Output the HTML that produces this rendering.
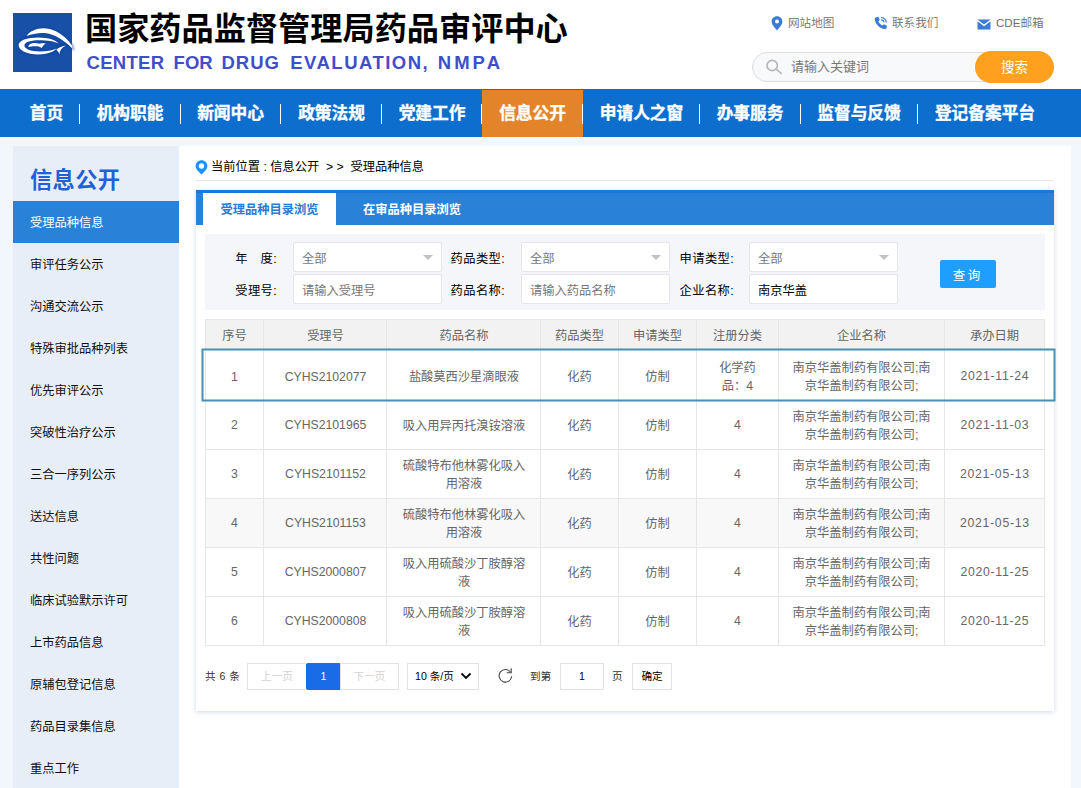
<!DOCTYPE html>
<html lang="zh-CN">
<head>
<meta charset="utf-8">
<title>国家药品监督管理局药品审评中心</title>
<style>
*{box-sizing:border-box;margin:0;padding:0}
html,body{width:1081px;height:788px;overflow:hidden}
body{position:relative;background:#f2f7fd;font-family:"Liberation Sans","Noto Sans CJK SC",sans-serif;font-size:12.25px;color:#333}
.abs{position:absolute}
#hdr{position:absolute;left:0;top:0;width:1081px;height:89px;background:#fff}
#logo{position:absolute;left:13px;top:13px;width:59px;height:59px;background:#1850a8}
#logo svg{position:absolute;left:0;top:0;overflow:visible}
#t1{position:absolute;left:85px;top:6.5px;font-size:32.2px;font-weight:bold;color:#000;line-height:44px;white-space:nowrap;letter-spacing:0}
#t2{position:absolute;left:86px;top:50px;font-size:18.5px;font-weight:bold;color:#3f4fcb;line-height:26px;white-space:nowrap}
.tl{position:absolute;top:15px;height:16px;line-height:16px;font-size:11.6px;color:#6e6e6e;font-weight:350;white-space:nowrap}
#sbox{position:absolute;left:752px;top:52px;width:300px;height:30px;border:1px solid #ddd;border-radius:15px;background:#f8f9fb}
#sph{position:absolute;left:791px;top:57px;font-size:13px;line-height:20px;color:#777;white-space:nowrap}
#sbtn{position:absolute;left:975px;top:51px;width:79px;height:32px;border-radius:16px;background:#ffa01f;color:#fff;font-size:13.5px;line-height:33px;text-align:center}
#nav{position:absolute;left:0;top:89px;width:1081px;height:48px;background:#0e6ecd}
.ni{position:absolute;top:0;height:48px;line-height:50.5px;color:#fff;font-size:16.7px;font-weight:bold;text-align:center;white-space:nowrap;-webkit-text-stroke:.35px #fff}
.ni.on{background:linear-gradient(#0e6ecd 1px,#e3842b 1px)}
.sep{position:absolute;top:15px;width:1px;height:20px;background:#fff}
#side{position:absolute;left:13px;top:146px;width:166px;height:642px;background:#e8eef7}
#side h2{position:absolute;left:17px;top:18.5px;letter-spacing:.4px;font-size:22.2px;line-height:32px;font-weight:bold;color:#1f62d8;white-space:nowrap}
.si{position:absolute;left:0;width:166px;height:42px;line-height:45px;padding-left:17px;font-size:12.25px;color:#111;white-space:nowrap}
.si.on{background:#2982d8;color:#fff}
#main{position:absolute;left:179px;top:146px;width:892px;height:642px;background:#fff}
</style>
</head>
<body>
<div id="hdr">
  <div id="logo">
    <svg width="59" height="59" viewBox="0 0 59 59">
      <defs><filter id="lb" x="-10%" y="-10%" width="130%" height="130%"><feGaussianBlur stdDeviation="0.45"/></filter><filter id="lb2" x="-10%" y="-10%" width="130%" height="130%"><feGaussianBlur stdDeviation="0.9"/></filter>
      <linearGradient id="tg" x1="0" y1="0" x2="1" y2="0"><stop offset="0" stop-color="#c8d6ee"/><stop offset="1" stop-color="#fff"/></linearGradient></defs>
      <path d="M58.5 31.8 C60.5 34 62.5 36.8 64.5 40 C62 37.6 60 35.8 58.5 34.6 Z" fill="url(#tg)" filter="url(#lb)"/>
      <g fill="none" stroke="#0c3c98" stroke-width="1.6" filter="url(#lb2)" opacity=".75"><path d="M5.6 32 C5.6 27.4 14 24.4 25.2 24.4 C35.5 24.4 43.5 27.2 45.6 30.6 C41.5 28.4 34.5 27.2 25.6 27.2 C16.5 27.2 11.4 29.6 11.4 32.6 C11.4 36 17.5 38.5 26.5 38.5 C33.5 38.5 39.5 37.5 43.6 35.6 C40.5 39.4 33.5 41.4 25.4 41.4 C13.6 41.4 5.6 37.4 5.6 32 Z"/>
      <path d="M13.6 23 C16.5 18.4 23 15.3 30.5 15.3 C38.5 15.3 47.5 19.4 54.6 27 C56.4 29 58 31 59.4 33 L59.4 35.8 C57.4 33.6 55.4 31.8 52.6 29.6 C46.4 24.6 39.4 20.400000000000002 30.5 20 C24.5 19.8 18.6 21.2 13.6 23 Z"/>
      <path d="M53 32.4 C48.6 33 45 34.8 43.2 36.8 C44.8 38 46 39.6 46.4 41.4 C46.4 37.8 48.6 34.6 53 32.4 Z"/>
      <path d="M15.2 33.9 C15.6 31 18.8 29.7 22.4 30 C24.6 30.2 26.200000000000003 30.9 27.4 30.6 C29 29.7 31.2 29.6 32.8 30.8 C30.8 31.6 29.8 33 28.8 35 C27.2 33.6 24.8 33.2 21.8 33.2 C19.2 33.2 16.8 33.4 15.2 33.9 Z"/></g>
      <g fill="#fff" filter="url(#lb)">
      <path d="M5.6 32 C5.6 27.4 14 24.4 25.2 24.4 C35.5 24.4 43.5 27.2 45.6 30.6 C41.5 28.4 34.5 27.2 25.6 27.2 C16.5 27.2 11.4 29.6 11.4 32.6 C11.4 36 17.5 38.5 26.5 38.5 C33.5 38.5 39.5 37.5 43.6 35.6 C40.5 39.4 33.5 41.4 25.4 41.4 C13.6 41.4 5.6 37.4 5.6 32 Z"/>
      <path d="M13.6 23 C16.5 18.4 23 15.3 30.5 15.3 C38.5 15.3 47.5 19.4 54.6 27 C56.4 29 58 31 59.4 33 L59.4 35.8 C57.4 33.6 55.4 31.8 52.6 29.6 C46.4 24.6 39.4 20.400000000000002 30.5 20 C24.5 19.8 18.6 21.2 13.6 23 Z"/>
      <path d="M53 32.4 C48.6 33 45 34.8 43.2 36.8 C44.8 38 46 39.6 46.4 41.4 C46.4 37.8 48.6 34.6 53 32.4 Z"/>
      <path d="M15.2 33.9 C15.6 31 18.8 29.7 22.4 30 C24.6 30.2 26.200000000000003 30.9 27.4 30.6 C29 29.7 31.2 29.6 32.8 30.8 C30.8 31.6 29.8 33 28.8 35 C27.2 33.6 24.8 33.2 21.8 33.2 C19.2 33.2 16.8 33.4 15.2 33.9 Z"/>
      </g>
    </svg>
  </div>
  <div id="t1">国家药品监督管理局药品审评中心</div>
  <div id="t2"><span style="position:absolute;left:0.5px;top:0;letter-spacing:0.29px">CENTER</span> <span style="position:absolute;left:87.5px;top:0;letter-spacing:0.09px">FOR</span> <span style="position:absolute;left:135.5px;top:0;letter-spacing:1px">DRUG</span> <span style="position:absolute;left:204.25px;top:0;letter-spacing:1.48px">EVALUATION,</span> <span style="position:absolute;left:351.75px;top:0;letter-spacing:3.05px">NMPA</span></div>

  <svg class="abs" style="left:771px;top:16px" width="12" height="15" viewBox="0 0 12 15"><path d="M6 0.3C2.9 0.3 0.6 2.6 0.6 5.6c0 3.4 3.6 6.6 5.4 8.9 1.8-2.3 5.4-5.5 5.4-8.9C11.400000000000001 2.6 9.1 0.3 6 0.3z" fill="#3a7bd5"/><circle cx="6" cy="5.5" r="2" fill="#fff"/></svg>
  <div class="tl" style="left:788px">网站地图</div>
  <svg class="abs" style="left:874px;top:16px" width="14" height="14" viewBox="0 0 14 14"><path d="M2.2 1.2 L4.4 0.8 L5.8 4 L4.3 5.2 C5 7 6.6 8.7 8.6 9.6 L9.9 8.2 L13 9.8 L12.500000000000002 12 C12.3 12.8 11.6 13.2 10.8 13.1 C5.6 12.4 1.2 8 0.8 2.9 C0.8 2 1.3 1.4 2.2 1.2 Z" fill="#3a7bd5"/><path d="M7.6 1.6 C10 1.8 11.9 3.6 12.2 6" stroke="#3a7bd5" stroke-width="1.2" fill="none" stroke-linecap="round"/><path d="M7.6 3.8 C8.8 4 9.7 4.9 10 6" stroke="#3a7bd5" stroke-width="1.2" fill="none" stroke-linecap="round"/></svg>
  <div class="tl" style="left:892px">联系我们</div>
  <svg class="abs" style="left:977px;top:19px" width="14" height="11" viewBox="0 0 14 11"><path d="M0.5 0.5h13L7 5.6z" fill="#3a7bd5"/><path d="M0.5 2.2L7 7.2l6.5-5V10.5h-13z" fill="#3a7bd5"/></svg>
  <div class="tl" style="left:996px">CDE邮箱</div>

  <div id="sbox"></div>
  <svg class="abs" style="left:765px;top:59px" width="18" height="17" viewBox="0 0 18 17"><circle cx="7.2" cy="6.5" r="5.2" fill="none" stroke="#b8b8b8" stroke-width="1.7"/><path d="M11.6 10.6l4.6 3.8" stroke="#b8b8b8" stroke-width="1.7" stroke-linecap="round"/></svg>
  <div id="sph">请输入关键词</div>
  <div id="sbtn">搜索</div>
</div>

<div id="nav">
  <div class="ni" style="left:13px;width:67px">首页</div>
  <div class="ni" style="left:80px;width:100px">机构职能</div>
  <div class="ni" style="left:180px;width:101px">新闻中心</div>
  <div class="ni" style="left:281px;width:101px">政策法规</div>
  <div class="ni" style="left:382px;width:100px">党建工作</div>
  <div class="ni on" style="left:482px;width:101px">信息公开</div>
  <div class="ni" style="left:583px;width:117px">申请人之窗</div>
  <div class="ni" style="left:700px;width:100px">办事服务</div>
  <div class="ni" style="left:800px;width:118px">监督与反馈</div>
  <div class="ni" style="left:918px;width:134px">登记备案平台</div>
  <div class="sep" style="left:79px"></div>
  <div class="sep" style="left:180px"></div>
  <div class="sep" style="left:280px"></div>
  <div class="sep" style="left:381px"></div>
  <div class="sep" style="left:481px"></div>
  <div class="sep" style="left:582px"></div>
  <div class="sep" style="left:699px"></div>
  <div class="sep" style="left:800px"></div>
  <div class="sep" style="left:917px"></div>
</div>

<div id="side">
  <h2>信息公开</h2>
  <div class="si on" style="top:55px">受理品种信息</div>
  <div class="si" style="top:97px">审评任务公示</div>
  <div class="si" style="top:139px">沟通交流公示</div>
  <div class="si" style="top:181px">特殊审批品种列表</div>
  <div class="si" style="top:223px">优先审评公示</div>
  <div class="si" style="top:265px">突破性治疗公示</div>
  <div class="si" style="top:307px">三合一序列公示</div>
  <div class="si" style="top:349px">送达信息</div>
  <div class="si" style="top:391px">共性问题</div>
  <div class="si" style="top:433px">临床试验默示许可</div>
  <div class="si" style="top:475px">上市药品信息</div>
  <div class="si" style="top:517px">原辅包登记信息</div>
  <div class="si" style="top:559px">药品目录集信息</div>
  <div class="si" style="top:601px">重点工作</div>
</div>

<div id="main"></div>

<style>
#bc{position:absolute;left:211px;top:158.4px;line-height:18px;font-size:12.25px;color:#000;white-space:nowrap}
#bcl{position:absolute;left:196px;top:180px;width:858px;height:1px;background:#e6e6e6}
#card{position:absolute;left:196px;top:190px;width:858px;height:521px;background:#fff;box-shadow:0 1px 5px rgba(120,140,170,.35)}
#tabs{position:absolute;left:0;top:0;width:858px;height:35px;background:linear-gradient(#1c77d6 3px,#2982d8 3px)}
#tab1{position:absolute;left:7px;top:3px;width:133px;height:32px;background:#fff;color:#2a7bd6;font-weight:bold;font-size:12.25px;line-height:34.5px;text-align:center}
#tab2{position:absolute;left:140px;top:3px;width:152px;height:32px;color:#fff;font-weight:bold;font-size:12.25px;line-height:34.5px;text-align:center}
#flt{position:absolute;left:9px;top:44px;width:840px;height:76px;background:#f4f6fa}
.lb{position:absolute;width:72px;text-align:right;font-size:12.25px;line-height:29px;margin-top:3.4px;color:#000;white-space:nowrap;letter-spacing:.4px}
.ip{position:absolute;width:149px;height:30px;border:1px solid #e6e6e6;border-radius:2px;background:#fff;font-size:12.25px;line-height:24.5px;padding-top:3.8px;padding-left:8px;color:#777;white-space:nowrap}
.ip i{position:absolute;right:8px;top:12px;width:0;height:0;border-left:5px solid transparent;border-right:5px solid transparent;border-top:5px solid #c2c2c2}
#qb{position:absolute;left:744px;top:70px;width:56px;height:28px;background:#1e9fff;border-radius:2px;color:#fff;font-size:12.5px;line-height:32px;text-align:center;word-spacing:-1.2px;padding-right:3px}
</style>
<div id="bc">当前位置 : 信息公开 &nbsp;&gt; &gt; &nbsp;受理品种信息</div>
<svg class="abs" style="left:195px;top:160px" width="13" height="15" viewBox="0 0 13 15"><path d="M6.5 0.3C3.2 0.3 0.6 2.8 0.6 6c0 3.500000000000001 3.9 6.3 5.9 8.7 2-2.4 5.9-5.2 5.9-8.7C12.4 2.8 9.8 0.3 6.5 0.3z" fill="#1e90ff"/><circle cx="6.5" cy="6" r="2.7" fill="#fff"/></svg>
<div id="bcl"></div>
<div id="card">
  <div id="tabs"><div id="tab1">受理品种目录浏览</div><div id="tab2">在审品种目录浏览</div></div>
  <div id="flt"></div>
  <div class="lb" style="left:9px;top:52px">年　度:</div>
  <div class="lb" style="left:9px;top:84px">受理号:</div>
  <div class="ip" style="left:97px;top:52px">全部<i></i></div>
  <div class="ip" style="left:97px;top:84px">请输入受理号</div>
  <div class="lb" style="left:237px;top:52px">药品类型:</div>
  <div class="lb" style="left:237px;top:84px">药品名称:</div>
  <div class="ip" style="left:325px;top:52px">全部<i></i></div>
  <div class="ip" style="left:325px;top:84px">请输入药品名称</div>
  <div class="lb" style="left:466px;top:52px">申请类型:</div>
  <div class="lb" style="left:466px;top:84px">企业名称:</div>
  <div class="ip" style="left:553px;top:52px">全部<i></i></div>
  <div class="ip" style="left:553px;top:84px;color:#000">南京华盖</div>
  <div id="qb">查 询</div>

<style>
#tb{position:absolute;left:0;top:0;font-size:12.25px;color:#666}
.hl{position:absolute;height:1px;background:#e6e6e6;left:9px;width:840px}
.vl{position:absolute;width:1px;background:#e6e6e6;top:129px;height:327px}
.c{position:absolute;display:flex;align-items:center;justify-content:center;text-align:center;line-height:17.5px;white-space:nowrap;color:#666}
#thbg{position:absolute;left:9px;top:129px;width:839px;height:30px;background:#f2f2f2}
#hvbg{position:absolute;left:9px;top:308.5px;width:839px;height:49px;background:#f8f8f8}
#sel{position:absolute;left:6px;top:159px;width:853px;height:53px;border:2px solid #4e94b4;border-radius:1px}
.pg{position:absolute;top:473px;height:26.6px;line-height:24.6px;font-size:10.6px;border:1px solid #e2e2e2;background:#fff;text-align:center;color:#d2d2d2;white-space:nowrap}
.pt{position:absolute;top:473px;height:26px;line-height:26px;font-size:10.6px;color:#333;white-space:nowrap}
</style>
<div id="tb">
<div id="thbg"></div><div id="hvbg"></div>
<div class="hl" style="top:129px"></div><div class="hl" style="top:159px"></div><div class="hl" style="top:210px"></div><div class="hl" style="top:259px"></div><div class="hl" style="top:308px"></div><div class="hl" style="top:357px"></div><div class="hl" style="top:406px"></div><div class="hl" style="top:455px"></div>
<div class="vl" style="left:9px"></div><div class="vl" style="left:67px"></div><div class="vl" style="left:190px"></div><div class="vl" style="left:344px"></div><div class="vl" style="left:422px"></div><div class="vl" style="left:500px"></div><div class="vl" style="left:582px"></div><div class="vl" style="left:748px"></div><div class="vl" style="left:848px"></div>
<div class="c" style="left:10px;top:132.6px;width:57px;height:29px">序号</div><div class="c" style="left:68px;top:132.6px;width:123px;height:29px">受理号</div><div class="c" style="left:192px;top:132.6px;width:152px;height:29px">药品名称</div><div class="c" style="left:345px;top:132.6px;width:77px;height:29px">药品类型</div><div class="c" style="left:423px;top:132.6px;width:77px;height:29px">申请类型</div><div class="c" style="left:501px;top:132.6px;width:81px;height:29px">注册分类</div><div class="c" style="left:583px;top:132.6px;width:165px;height:29px">企业名称</div><div class="c" style="left:749px;top:132.6px;width:99px;height:29px">承办日期</div>
<div class="c" style="left:10px;top:162.9px;width:57px;height:50px"><span style="position:relative;top:-.6px">1</span></div><div class="c" style="left:68px;top:162.9px;width:123px;height:50px"><span style="position:relative;top:-.6px">CYHS2102077</span></div><div class="c" style="left:192px;top:162.9px;width:152px;height:50px">盐酸莫西沙星滴眼液</div><div class="c" style="left:345px;top:162.9px;width:77px;height:50px">化药</div><div class="c" style="left:423px;top:162.9px;width:77px;height:50px">仿制</div><div class="c" style="left:501px;top:162.9px;width:81px;height:50px">化学药<br>品：4</div><div class="c" style="left:583px;top:162.9px;width:165px;height:50px">南京华盖制药有限公司;南<br>京华盖制药有限公司;</div><div class="c" style="left:749px;top:162.9px;width:99px;height:50px"><span style="letter-spacing:.72px;margin-right:-.72px;position:relative;top:-.9px">2021-11-24</span></div>
<div class="c" style="left:10px;top:212.7px;width:57px;height:48px"><span style="position:relative;top:-.6px">2</span></div><div class="c" style="left:68px;top:212.7px;width:123px;height:48px"><span style="position:relative;top:-.6px">CYHS2101965</span></div><div class="c" style="left:192px;top:212.7px;width:152px;height:48px">吸入用异丙托溴铵溶液</div><div class="c" style="left:345px;top:212.7px;width:77px;height:48px">化药</div><div class="c" style="left:423px;top:212.7px;width:77px;height:48px">仿制</div><div class="c" style="left:501px;top:212.7px;width:81px;height:48px"><span style="position:relative;top:-.6px">4</span></div><div class="c" style="left:583px;top:212.7px;width:165px;height:48px">南京华盖制药有限公司;南<br>京华盖制药有限公司;</div><div class="c" style="left:749px;top:212.7px;width:99px;height:48px"><span style="letter-spacing:.72px;margin-right:-.72px;position:relative;top:-.9px">2021-11-03</span></div>
<div class="c" style="left:10px;top:261.7px;width:57px;height:48px"><span style="position:relative;top:-.6px">3</span></div><div class="c" style="left:68px;top:261.7px;width:123px;height:48px"><span style="position:relative;top:-.6px">CYHS2101152</span></div><div class="c" style="left:192px;top:261.7px;width:152px;height:48px">硫酸特布他林雾化吸入<br>用溶液</div><div class="c" style="left:345px;top:261.7px;width:77px;height:48px">化药</div><div class="c" style="left:423px;top:261.7px;width:77px;height:48px">仿制</div><div class="c" style="left:501px;top:261.7px;width:81px;height:48px"><span style="position:relative;top:-.6px">4</span></div><div class="c" style="left:583px;top:261.7px;width:165px;height:48px">南京华盖制药有限公司;南<br>京华盖制药有限公司;</div><div class="c" style="left:749px;top:261.7px;width:99px;height:48px"><span style="letter-spacing:.72px;margin-right:-.72px;position:relative;top:-.9px">2021-05-13</span></div>
<div class="c" style="left:10px;top:310.7px;width:57px;height:48px"><span style="position:relative;top:-.6px">4</span></div><div class="c" style="left:68px;top:310.7px;width:123px;height:48px"><span style="position:relative;top:-.6px">CYHS2101153</span></div><div class="c" style="left:192px;top:310.7px;width:152px;height:48px">硫酸特布他林雾化吸入<br>用溶液</div><div class="c" style="left:345px;top:310.7px;width:77px;height:48px">化药</div><div class="c" style="left:423px;top:310.7px;width:77px;height:48px">仿制</div><div class="c" style="left:501px;top:310.7px;width:81px;height:48px"><span style="position:relative;top:-.6px">4</span></div><div class="c" style="left:583px;top:310.7px;width:165px;height:48px">南京华盖制药有限公司;南<br>京华盖制药有限公司;</div><div class="c" style="left:749px;top:310.7px;width:99px;height:48px"><span style="letter-spacing:.72px;margin-right:-.72px;position:relative;top:-.9px">2021-05-13</span></div>
<div class="c" style="left:10px;top:359.7px;width:57px;height:48px"><span style="position:relative;top:-.6px">5</span></div><div class="c" style="left:68px;top:359.7px;width:123px;height:48px"><span style="position:relative;top:-.6px">CYHS2000807</span></div><div class="c" style="left:192px;top:359.7px;width:152px;height:48px">吸入用硫酸沙丁胺醇溶<br>液</div><div class="c" style="left:345px;top:359.7px;width:77px;height:48px">化药</div><div class="c" style="left:423px;top:359.7px;width:77px;height:48px">仿制</div><div class="c" style="left:501px;top:359.7px;width:81px;height:48px"><span style="position:relative;top:-.6px">4</span></div><div class="c" style="left:583px;top:359.7px;width:165px;height:48px">南京华盖制药有限公司;南<br>京华盖制药有限公司;</div><div class="c" style="left:749px;top:359.7px;width:99px;height:48px"><span style="letter-spacing:.72px;margin-right:-.72px;position:relative;top:-.9px">2020-11-25</span></div>
<div class="c" style="left:10px;top:408.7px;width:57px;height:48px"><span style="position:relative;top:-.6px">6</span></div><div class="c" style="left:68px;top:408.7px;width:123px;height:48px"><span style="position:relative;top:-.6px">CYHS2000808</span></div><div class="c" style="left:192px;top:408.7px;width:152px;height:48px">吸入用硫酸沙丁胺醇溶<br>液</div><div class="c" style="left:345px;top:408.7px;width:77px;height:48px">化药</div><div class="c" style="left:423px;top:408.7px;width:77px;height:48px">仿制</div><div class="c" style="left:501px;top:408.7px;width:81px;height:48px"><span style="position:relative;top:-.6px">4</span></div><div class="c" style="left:583px;top:408.7px;width:165px;height:48px">南京华盖制药有限公司;南<br>京华盖制药有限公司;</div><div class="c" style="left:749px;top:408.7px;width:99px;height:48px"><span style="letter-spacing:.72px;margin-right:-.72px;position:relative;top:-.9px">2020-11-25</span></div>
</div>
<svg class="abs" style="left:0;top:150px" width="870" height="70" viewBox="0 0 870 70"><rect x="6.5" y="9.5" width="852" height="51" fill="none" stroke="#4a90b2" stroke-width="2"/></svg>
<div class="pt" style="left:9px;letter-spacing:.5px">共 6 条</div>
<div class="pg" style="left:51px;width:60px">上一页</div>
<div class="pg" style="left:110px;width:35px;background:#1a6be6;border-color:#1a6be6;color:#fff;border-radius:2px">1</div>
<div class="pg" style="left:144px;width:59px">下一页</div>
<div class="pg" style="left:211px;width:72px;color:#000;text-align:left;padding-left:7px">10 条/页</div>
<svg class="abs" style="left:264px;top:481px" width="12" height="10" viewBox="0 0 12 10"><path d="M1.5 2.5l4.5 4.5 4.5-4.5" fill="none" stroke="#000" stroke-width="1.8"/></svg>
<svg class="abs" style="left:301px;top:477px" width="17" height="17" viewBox="0 0 17 17"><path d="M13.6 5.2A6.300000000000001 6.300000000000001 0 1 0 14.7 9.3" fill="none" stroke="#444" stroke-width="1.1"/><path d="M14.2 1.2v4.5h-4.5" fill="none" stroke="#444" stroke-width="1.1"/></svg>
<div class="pt" style="left:334px">到第</div>
<div class="pg" style="left:364px;width:44px;color:#000">1</div>
<div class="pt" style="left:416px">页</div>
<div class="pg" style="left:436px;width:40px;color:#000">确定</div>

</div>

</body>
</html>
